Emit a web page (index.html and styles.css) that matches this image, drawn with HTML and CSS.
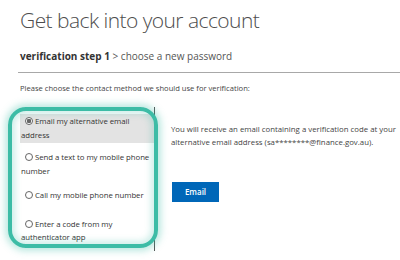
FILE: index.html
```html
<!DOCTYPE html>
<html>
<head>
<meta charset="utf-8">
<link rel="stylesheet" href="styles.css">
</head>
<body>
<div class="page">
  <h1 class="title">Get back into your account</h1>
  <div class="crumbs"><b>verification step 1</b> &gt; choose a new password</div>
  <div class="rule"></div>
  <p class="prompt">Please choose the contact method we should use for verification:</p>
  <div class="main">
    <div class="list">
      <div class="item selected"><span class="radio checked"></span>Email my alternative email address</div>
      <div class="item"><span class="radio"></span>Send a text to my mobile phone number</div>
      <div class="item single"><span class="radio"></span>Call my mobile phone number</div>
      <div class="item"><span class="radio"></span>Enter a code from my authenticator app</div>
    </div>
    <div class="detail">
      <p class="info">You will receive an email containing a verification code at your alternative email address (sa********@finance.gov.au).</p>
      <div class="btn">Email</div>
    </div>
  </div>
  <div class="highlight"></div>
</div>
</body>
</html>
```
FILE: styles.css
```css
html, body {
  margin: 0;
  padding: 0;
  background: #fff;
  width: 400px;
  height: 260px;
  overflow: hidden;
}
.page {
  position: relative;
  font-family: "Open Sans", "Noto Sans", sans-serif;
  color: #333;
  padding-top: 4px;
}
.title {
  margin: 0 0 0 20px;
  font-size: 21px;
  line-height: 32px;
  font-weight: 300;
  color: #4d4d4d;
  letter-spacing: -0.55px;
}
.crumbs {
  margin: 13px 0 0 20px;
  font-size: 10px;
  line-height: 14px;
  color: #555;
}
.crumbs b {
  color: #333;
  font-weight: 700;
}
.rule {
  margin: 9px 0 0 18px;
  border-top: 1px solid #a8a8a8;
}
.prompt {
  margin: 10px 0 0 20px;
  font-size: 7.6px;
  line-height: 10px;
  color: #444;
}
.main {
  display: flex;
  margin: 14px 0 0 20px;
}
.list {
  flex: 0 0 135px;
  height: 144px;
  border-right: 1px solid #555;
  padding-top: 7px;
  box-sizing: border-box;
}
.item {
  font-size: 7.8px;
  line-height: 13.5px;
  color: #333;
  padding: 1px 1px 0 1px;
  margin-bottom: 10px;
  letter-spacing: -0.05px;
}
.item.selected {
  background: #e3e3e3;
  margin-bottom: 7px;
  padding-bottom: 1px;
}
.item.single {
  margin-bottom: 14px;
}
.radio {
  display: inline-block;
  width: 8px;
  height: 8px;
  border: 1px solid #666;
  border-radius: 50%;
  box-sizing: border-box;
  margin: 0 2px 0 4px;
  vertical-align: -1px;
  background: #fff;
}
.radio.checked {
  background: radial-gradient(circle, #666 0 2px, #fff 2.5px);
}
.detail {
  flex: 1 1 auto;
  padding-left: 16px;
  padding-top: 16px;
  min-width: 0;
}
.info {
  margin: 0;
  font-size: 7.8px;
  line-height: 13px;
  color: #444;
  width: 229px;
}
.btn {
  margin-top: 33px;
  margin-left: 1px;
  width: 47px;
  height: 20px;
  background: #0067b8;
  color: #fff;
  font-size: 8px;
  font-weight: 600;
  line-height: 20px;
  text-align: center;
}
.highlight {
  position: absolute;
  left: 8px;
  top: 107px;
  width: 150px;
  height: 141px;
  border: 4px solid #3dbca6;
  border-radius: 18px;
  box-sizing: border-box;
  box-shadow: 0 0 7px 3px rgba(61, 188, 166, 0.35), inset 0 0 6px 3px rgba(61, 188, 166, 0.25);
}
```
